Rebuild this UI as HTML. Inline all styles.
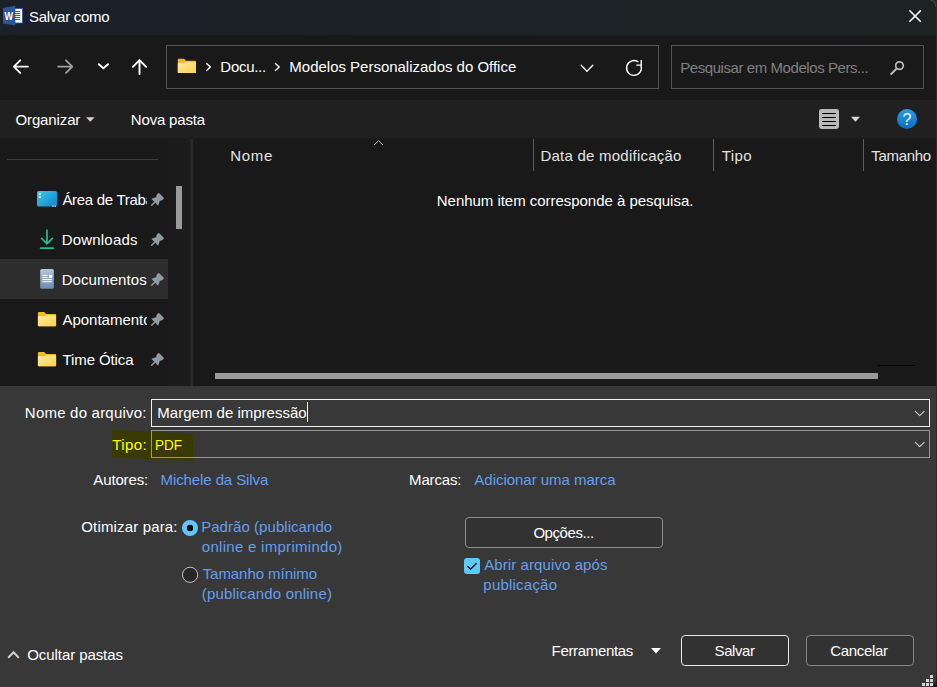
<!DOCTYPE html>
<html lang="pt-BR">
<head>
<meta charset="utf-8">
<title>Salvar como</title>
<style>
html,body{margin:0;padding:0;background:#191919;}
body{width:937px;height:687px;position:relative;overflow:hidden;font-family:"Liberation Sans",sans-serif;}
.abs{position:absolute;}
.t{position:absolute;white-space:nowrap;line-height:1;}
#titlebar{left:0;top:0;width:937px;height:35px;background:linear-gradient(90deg,#1b2029,#1b2127 40%,#1c2324 75%,#1c2323);}
#navbar{left:0;top:35px;width:937px;height:65px;background:#191919;}
#toolbar{left:0;top:100px;width:937px;height:38px;background:#202020;}
#sidebar{left:0;top:138px;width:190px;height:248px;background:#191919;}
#splitter{left:190px;top:139px;width:4px;height:247px;background:linear-gradient(90deg,#202020,#2b2b2b 40%,#2b2b2b 60%,#202020);}
#filepane{left:193px;top:138px;width:744px;height:248px;background:#191919;}
#bottom{left:0;top:386px;width:937px;height:301px;background:#383838;}
.box{position:absolute;box-sizing:border-box;}
</style>
</head>
<body>
<div id="titlebar" class="abs"></div>
<div id="navbar" class="abs"></div>
<div id="toolbar" class="abs"></div>
<div id="sidebar" class="abs"></div>
<div id="splitter" class="abs"></div>
<div id="filepane" class="abs"></div>
<div id="bottom" class="abs"></div>

<!-- address and search boxes -->
<div class="box" style="left:166px;top:45px;width:493px;height:44px;border:1px solid #545454;"></div>
<div class="box" style="left:671px;top:45px;width:253px;height:44px;border:1px solid #545454;"></div>

<!-- sidebar -->
<div class="abs" style="left:168px;top:138px;width:22px;height:248px;background:#1c1c1c;"></div>
<div class="abs" style="left:7px;top:159px;width:151px;height:1px;background:#3c3c3c;"></div>
<div class="abs" style="left:0;top:259px;width:168px;height:40px;background:#2d2d2d;"></div>
<div class="abs" style="left:176px;top:186px;width:6px;height:43px;background:#9a9a9a;"></div>
<div class="abs" style="left:62.4px;top:189px;width:85px;height:22px;overflow:hidden;"><span id="t_area" class="t" style="left:0;top:3px;font-size:15px;color:#fff;letter-spacing:-0.3px;">Área de Trabalho</span></div>
<div class="abs" style="left:62.4px;top:309px;width:84.8px;height:22px;overflow:hidden;"><span id="t_apont" class="t" style="left:0;top:3px;font-size:15px;color:#fff;">Apontamentos</span></div>

<!-- file pane header -->
<div class="abs" style="left:533px;top:139px;width:1px;height:32px;background:#5c5c5c;"></div>
<div class="abs" style="left:713px;top:139px;width:1px;height:32px;background:#5c5c5c;"></div>
<div class="abs" style="left:863px;top:139px;width:1px;height:32px;background:#5c5c5c;"></div>
<!-- h scrollbar -->
<div class="abs" style="left:215px;top:373px;width:663px;height:6px;background:#9a9a9a;"></div>
<div class="abs" style="left:878px;top:365px;width:37px;height:1px;background:#000;"></div>

<!-- bottom panel -->
<svg class="abs" style="left:0;top:386px" width="937" height="100" viewBox="0 386 937 100">
<defs><clipPath id="hl"><polygon points="112,429.8 193,434 193,460.8 112,457.6"/></clipPath></defs>
<polygon points="112,429.8 193,434 193,460.8 112,457.6" fill="#3a3a00"/>
<rect x="151.5" y="430.5" width="778" height="27" fill="none" stroke="#979797" stroke-width="1"/>
<rect x="151.5" y="430.5" width="778" height="27" fill="none" stroke="#a8a800" stroke-width="1" clip-path="url(#hl)"/>
</svg>
<div class="box" style="left:151px;top:399px;width:779px;height:28px;border:1px solid #f0f0f0;background:#383838;"></div>
<div class="abs" style="left:307px;top:402px;width:1px;height:20px;background:#fff;"></div>

<div class="box" style="left:465px;top:517px;width:198px;height:31px;border:1px solid #8c8c8c;border-radius:4px;background:#323232;"></div>
<div class="box" style="left:681px;top:635px;width:108px;height:31px;border:1px solid #e8e8e8;border-radius:4px;background:#323232;"></div>
<div class="box" style="left:806px;top:635px;width:108px;height:31px;border:1px solid #888;border-radius:4px;background:#323232;"></div>

<svg id="edge" class="abs" style="left:917px;top:0" width="20" height="687" viewBox="917 0 20 687">
<path d="M931 0 H937 V687 H936 V6 Q936 0.5 931 0Z" fill="#2a2a2a"/>
<path d="M930.5 0.3 Q935.6 0.8 935.7 6.5" fill="none" stroke="#4e4e4e" stroke-width="1"/>
<path d="M937 676 V687 H930 Q936 686 937 676Z" fill="#1a1a1a"/>
</svg>
<svg class="abs" style="left:0;top:0" width="937" height="687" viewBox="0 0 937 687">
<defs>
<linearGradient id="fold" x1="0" y1="0" x2="1" y2="1"><stop offset="0" stop-color="#ffe9a0"/><stop offset="1" stop-color="#ffd050"/></linearGradient>
<linearGradient id="desk" x1="0" y1="0" x2="1" y2="1"><stop offset="0" stop-color="#3acbe8"/><stop offset="1" stop-color="#1480cc"/></linearGradient>
<linearGradient id="docg" x1="0" y1="0" x2="0" y2="1"><stop offset="0" stop-color="#b6c7da"/><stop offset="1" stop-color="#6a8bb4"/></linearGradient>
<linearGradient id="helpg" x1="0" y1="0" x2="0" y2="1"><stop offset="0" stop-color="#2a9bea"/><stop offset="1" stop-color="#0c6cc4"/></linearGradient>
<g id="folder">
<path d="M0.8 0 H5.8 Q6.3 0 6.7 0.4 L8.2 2 H17.4 Q18.2 2 18.2 2.8 V13.5 Q18.2 14.3 17.4 14.3 H0.8 Q0 14.3 0 13.5 V0.8 Q0 0 0.8 0Z" fill="#f3b822"/>
<path d="M0 5 Q0 4.2 0.8 4.2 H6.2 L7.6 3.3 H17.4 Q18.2 3.3 18.2 4.1 V13.5 Q18.2 14.3 17.4 14.3 H0.8 Q0 14.3 0 13.5Z" fill="url(#fold)"/>
</g>
<g id="pin"><g transform="rotate(-45)" fill="#909ba1"><rect x="0" y="-0.8" width="6" height="1.6" rx="0.7"/><path d="M5.7 -4.7 Q7.6 -3.2 9.2 -2.8 L10.6 -3 Q11 -3.9 12 -3.9 L13.5 -3.9 Q14.6 -3.9 14.6 -2.8 L14.6 2.8 Q14.6 3.9 13.5 3.9 L12 3.9 Q11 3.9 10.6 3 L9.2 2.8 Q7.6 3.2 5.7 4.7 Q5 5 5 4.2 L5 -4.2 Q5 -5 5.7 -4.7Z"/></g></g>
</defs>

<!-- Word icon -->
<polygon points="3,8 15.2,5.8 15.2,25.6 3,23.6" fill="#2b579a"/>
<rect x="15" y="8.6" width="7.4" height="14.4" fill="#ffffff" stroke="#2b579a" stroke-width="0.8"/>
<g stroke="#2b579a" stroke-width="1"><path d="M15.2 11.5H20.2 M15.2 13.5H20.2 M15.2 15.5H20.2 M15.2 17.5H20.2 M15.2 19.5H20.2"/></g>
<text x="4.6" y="20.1" font-family="Liberation Sans, sans-serif" font-weight="bold" font-size="11.8" fill="#ffffff" textLength="8.6" lengthAdjust="spacingAndGlyphs">W</text>

<!-- close X -->
<path d="M909.4 10.4 L920.8 21.8 M920.8 10.4 L909.4 21.8" stroke="#ffffff" stroke-width="1.5" fill="none"/>

<!-- nav arrows -->
<g fill="none" stroke="#ffffff" stroke-width="1.9" stroke-linecap="round" stroke-linejoin="round">
<path d="M28 66.6 H14.2 M20.2 60.3 L13.9 66.6 L20.2 72.9"/>
<path d="M139.5 74 V60.4 M132.9 66.8 L139.5 60.1 L146.1 66.8"/>
</g>
<path d="M98.8 64.2 L103.4 68.3 L108 64.2" fill="none" stroke="#ffffff" stroke-width="1.9" stroke-linecap="round" stroke-linejoin="round"/>
<g fill="none" stroke="#a0a0a0" stroke-width="1.9" stroke-linecap="round" stroke-linejoin="round">
<path d="M58.2 66.6 H72 M66 60.3 L72.3 66.6 L66 72.9"/>
</g>

<!-- address bar icons -->
<use href="#folder" x="177.8" y="58.7"/>
<g fill="none" stroke="#ffffff" stroke-width="1.4" stroke-linecap="round" stroke-linejoin="round">
<path d="M206.6 63.6 L210.4 67 L206.6 70.4"/>
<path d="M275.4 63.6 L279.2 67 L275.4 70.4"/>
<path d="M581.2 65.2 L587 71.2 L592.8 65.2"/>
<path d="M641 65.6 A7.4 7.4 0 1 1 637.9 61.7 M641.2 60.5 V65.1 H636.8"/>
</g>
<!-- search icon -->
<g fill="none" stroke="#b8b8b8" stroke-width="1.7" stroke-linecap="round">
<circle cx="899.5" cy="65.6" r="3.8"/>
<path d="M896.4 68.7 L891.2 73.9" stroke-width="2.1"/>
</g>

<!-- toolbar icons -->
<path d="M86 117.2 H94.6 L90.3 121.8Z" fill="#d2d2d2"/>
<rect x="819" y="109" width="20" height="20" rx="2.4" fill="#b9b9b9"/>
<g stroke="#000" stroke-width="1" stroke-linecap="round"><path d="M822.5 113.5H835.5 M822.5 117.5H835.5 M822.5 121.5H835.5 M822.5 125.5H835.5"/></g>
<path d="M851 116.8 H860 L855.5 121.8Z" fill="#d8d8d8"/>
<circle cx="907" cy="119" r="10" fill="url(#helpg)"/>
<text x="907" y="124.8" font-family="Liberation Sans, sans-serif" font-size="16" fill="#ffffff" text-anchor="middle">?</text>

<!-- sort caret -->
<path d="M374 145 L378.5 140.6 L383 145" fill="none" stroke="#bdbdbd" stroke-width="1"/>

<!-- sidebar icons -->
<rect x="37" y="191" width="20" height="15.6" rx="1.6" fill="url(#desk)"/>
<rect x="38.8" y="193.4" width="2" height="1.6" fill="#fff"/><rect x="38.8" y="196.4" width="2" height="1.6" fill="#fff"/>
<rect x="52.4" y="205.6" width="1.2" height="1.2" fill="#fff"/><rect x="54.6" y="205.6" width="1.2" height="1.2" fill="#fff"/>
<g fill="none" stroke="#1fbf93" stroke-width="1.7" stroke-linecap="round" stroke-linejoin="round">
<path d="M47 230 V243.4 M41.6 238.4 L47 243.8 L52.4 238.4 M40.6 248.2 H53.4"/>
</g>
<rect x="40.2" y="269" width="13.6" height="19.8" rx="1.6" fill="url(#docg)"/>
<g stroke="#ffffff" stroke-width="1"><path d="M42.4 275.4H47.6 M42.4 277.5H47.6 M42.4 279.6H51.8 M42.4 281.7H51.8"/></g>
<rect x="49" y="274.9" width="3" height="3" fill="#fff"/>
<use href="#folder" x="37.9" y="311.9"/>
<use href="#folder" x="37.9" y="351.9"/>
<use href="#pin" x="151.2" y="205.8"/>
<use href="#pin" x="151.2" y="245.8"/>
<use href="#pin" x="151.2" y="285.8"/>
<use href="#pin" x="151.2" y="325.8"/>
<use href="#pin" x="151.2" y="365.8"/>

<!-- combobox chevrons -->
<g fill="none" stroke="#cfcfcf" stroke-width="1.1" stroke-linecap="round" stroke-linejoin="round">
<path d="M915.3 411.3 L919.7 415.7 L924.1 411.3"/>
<path d="M915.3 442.3 L919.7 446.7 L924.1 442.3"/>
</g>

<!-- radios -->
<circle cx="190" cy="528" r="8" fill="#60c8f8"/>
<circle cx="190" cy="528" r="3.2" fill="#000"/>
<circle cx="190.1" cy="574.8" r="7.6" fill="#272727" stroke="#c2c2c2" stroke-width="1"/>
<!-- checkbox -->
<rect x="464" y="558" width="16" height="16" rx="3" fill="#60c8f8"/>
<path d="M467.6 566.2 L470.6 569.2 L476.6 563.2" fill="none" stroke="#000" stroke-width="1.3"/>

<!-- bottom -->
<path d="M8.2 657.8 L13.5 652.2 L18.8 657.8" fill="none" stroke="#cfcfcf" stroke-width="2"/>
<path d="M651 648 H661 L656 653.4Z" fill="#ffffff"/>
<!-- resize grip -->
<g fill="#d4d4d4">
<rect x="930" y="675" width="3" height="3"/><rect x="926" y="679" width="3" height="3"/><rect x="930" y="679" width="3" height="3"/><rect x="922" y="683" width="3" height="3"/><rect x="926" y="683" width="3" height="3"/><rect x="930" y="683" width="3" height="3"/>
</g>
</svg>

<span id="t_title" class="t" style="left:29.02px;top:9.00px;font-size:15.0px;color:#ffffff;letter-spacing:-0.276px;">Salvar como</span>
<span id="t_docu" class="t" style="left:220.37px;top:59.00px;font-size:15.0px;color:#ffffff;letter-spacing:-0.289px;">Docu...</span>
<span id="t_path" class="t" style="left:289.37px;top:59.00px;font-size:15.0px;color:#ffffff;letter-spacing:-0.015px;">Modelos Personalizados do Office</span>
<span id="t_search" class="t" style="left:680.17px;top:60.00px;font-size:15.0px;color:#808080;letter-spacing:-0.426px;">Pesquisar em Modelos Pers...</span>
<span id="t_org" class="t" style="left:15.49px;top:112.00px;font-size:15.0px;color:#ffffff;letter-spacing:-0.125px;">Organizar</span>
<span id="t_nova" class="t" style="left:130.87px;top:112.00px;font-size:15.0px;color:#ffffff;letter-spacing:-0.184px;">Nova pasta</span>
<span id="t_nome" class="t" style="left:230.27px;top:148.00px;font-size:15.0px;color:#e4e4e4;letter-spacing:0.694px;">Nome</span>
<span id="t_data" class="t" style="left:540.47px;top:148.00px;font-size:15.0px;color:#e4e4e4;letter-spacing:0.234px;">Data de modificação</span>
<span id="t_tipoh" class="t" style="left:721.66px;top:148.00px;font-size:15.0px;color:#e4e4e4;letter-spacing:0.447px;">Tipo</span>
<span id="t_tam" class="t" style="left:871.16px;top:148.00px;font-size:15.0px;color:#e4e4e4;letter-spacing:-0.275px;">Tamanho</span>
<span id="t_nenhum" class="t" style="left:436.77px;top:193.00px;font-size:15.0px;color:#ffffff;letter-spacing:-0.031px;">Nenhum item corresponde à pesquisa.</span>
<span id="t_down" class="t" style="left:61.67px;top:232.00px;font-size:15.0px;color:#ffffff;letter-spacing:0.207px;">Downloads</span>
<span id="t_docs" class="t" style="left:61.67px;top:272.00px;font-size:15.0px;color:#ffffff;letter-spacing:0.095px;">Documentos</span>
<span id="t_time" class="t" style="left:62.56px;top:352.00px;font-size:15.0px;color:#ffffff;letter-spacing:-0.102px;">Time Ótica</span>
<span id="t_nomearq" class="t" style="left:24.87px;top:405.00px;font-size:15.0px;color:#ffffff;letter-spacing:0.213px;">Nome do arquivo:</span>
<span id="t_margem" class="t" style="left:157.37px;top:405.00px;font-size:15.0px;color:#ffffff;letter-spacing:0.001px;">Margem de impressão</span>
<span id="t_tipo" class="t" style="left:112.16px;top:437.00px;font-size:15.0px;color:#ffff00;letter-spacing:0.402px;">Tipo:</span>
<span id="t_pdf" class="t" style="left:154.59px;top:437.00px;font-size:15.0px;color:#ffff00;letter-spacing:0.000px;transform:scaleX(0.8982);transform-origin:0 0;">PDF</span>
<span id="t_aut" class="t" style="left:93.37px;top:472.00px;font-size:15.0px;color:#ffffff;letter-spacing:-0.154px;">Autores:</span>
<span id="t_mich" class="t" style="left:160.57px;top:472.00px;font-size:15.0px;color:#659fee;letter-spacing:-0.099px;">Michele da Silva</span>
<span id="t_marcas" class="t" style="left:409.07px;top:472.00px;font-size:15.0px;color:#ffffff;letter-spacing:-0.157px;">Marcas:</span>
<span id="t_adic" class="t" style="left:474.37px;top:472.00px;font-size:15.0px;color:#659fee;letter-spacing:-0.034px;">Adicionar uma marca</span>
<span id="t_otim" class="t" style="left:81.29px;top:519.00px;font-size:15.0px;color:#ffffff;letter-spacing:0.152px;">Otimizar para:</span>
<span id="t_r1a" class="t" style="left:201.17px;top:519.00px;font-size:15.0px;color:#659fee;letter-spacing:0.051px;">Padrão (publicando</span>
<span id="t_r1b" class="t" style="left:201.77px;top:539.00px;font-size:15.0px;color:#659fee;letter-spacing:0.289px;">online e imprimindo)</span>
<span id="t_r2a" class="t" style="left:202.66px;top:566.00px;font-size:15.0px;color:#659fee;letter-spacing:-0.054px;">Tamanho mínimo</span>
<span id="t_r2b" class="t" style="left:201.77px;top:586.00px;font-size:15.0px;color:#659fee;letter-spacing:0.189px;">(publicando online)</span>
<span id="t_opc" class="t" style="left:533.39px;top:525.00px;font-size:15.0px;color:#ffffff;letter-spacing:-0.428px;">Opções...</span>
<span id="t_ab1" class="t" style="left:484.27px;top:557.00px;font-size:15.0px;color:#659fee;letter-spacing:0.085px;">Abrir arquivo após</span>
<span id="t_ab2" class="t" style="left:483.33px;top:577.00px;font-size:15.0px;color:#659fee;letter-spacing:0.220px;">publicação</span>
<span id="t_ocultar" class="t" style="left:27.29px;top:647.00px;font-size:15.0px;color:#ffffff;letter-spacing:-0.082px;">Ocultar pastas</span>
<span id="t_ferr" class="t" style="left:551.57px;top:643.00px;font-size:15.0px;color:#ffffff;letter-spacing:-0.326px;">Ferramentas</span>
<span id="t_salvar" class="t" style="left:714.62px;top:643.00px;font-size:15.0px;color:#ffffff;letter-spacing:-0.440px;">Salvar</span>
<span id="t_canc" class="t" style="left:830.24px;top:643.00px;font-size:15.0px;color:#ffffff;letter-spacing:-0.317px;">Cancelar</span>
</body>
</html>
